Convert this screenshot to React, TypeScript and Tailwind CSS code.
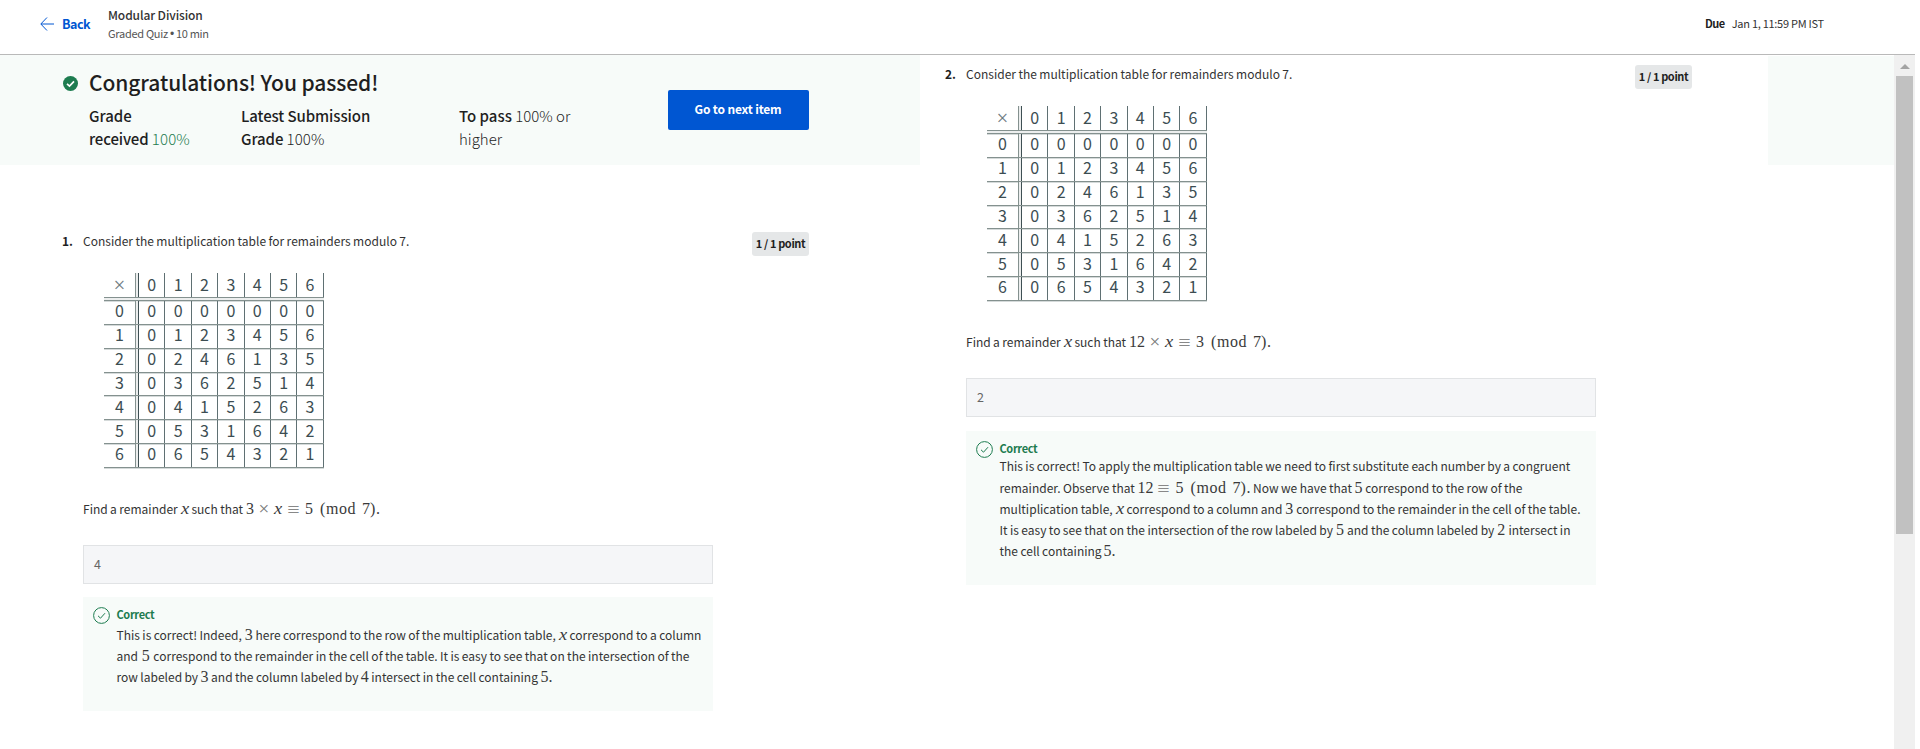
import type { ReactNode } from "react";

const TABLE = [0, 1, 2, 3, 4, 5, 6].map((r) => [0, 1, 2, 3, 4, 5, 6].map((c) => (r * c) % 7));

const MATH = "font-['Liberation_Serif','Times_New_Roman',serif] leading-[0] tracking-normal [word-spacing:normal] text-[#3a3a3a]";

function M({ children }: { children: ReactNode }) {
  return <span className={`${MATH} shrink-0 text-[16px]`}>{children}</span>;
}

function X() {
  return <span className={`${MATH} inline-block w-2 scale-x-115 text-center text-[16px] italic`}>x</span>;
}

function Times() {
  return <span className="inline-block w-5 translate-y-px text-center text-[19px] text-[#777]">×</span>;
}

function Mod({ value, modulus }: { value: string; modulus: string }) {
  return (
    <>
      <span className="inline-block w-[23px] translate-y-[2px] scale-x-110 text-center text-[20px] text-[#888]">≡</span>
      <span className="inline-block w-2">{value}</span>
      <span className="ml-[7px] inline-block w-[5px]">(</span>
      <span className="ml-px inline-block w-8 tracking-[0.5px]">mod</span>
      <span className="ml-1 inline-block w-2">{modulus}</span>
      <span className="inline-block w-[6px]">)</span>
    </>
  );
}

function Line({ width, children }: { width: string; children: ReactNode }) {
  return <div className={`flex items-baseline justify-between whitespace-nowrap ${width}`}>{children}</div>;
}

const HLINE = "border-b border-[#84918f] shadow-[0_1px_0_#d5dada]";

function RemainderTable() {
  const cell = "flex items-center justify-center border-r border-[#5f7073] pb-[3px]";
  return (
    <div className="w-[220px] text-[16px] leading-none tracking-normal text-[#3c4d52]">
      <div className={`flex h-[25px] ${HLINE}`}>
        <div className="flex w-8 items-center justify-center border-r border-[#84918f] font-['Liberation_Serif',serif] text-[21px] text-[#6e7b7f]">
          ×
        </div>
        <div className="w-[3px] border-r border-[#3f5054] bg-[#eceeee]" />
        {TABLE[1].map((n) => (
          <div key={n} className={`w-[26.4px] ${cell}`}>
            {n}
          </div>
        ))}
      </div>
      <div className={`h-[3px] bg-[#eceeee] ${HLINE}`} />
      {TABLE.map((row, r) => (
        <div key={r} className={`flex h-[23.85px] ${HLINE}`}>
          <div className="flex w-8 items-center justify-center border-r border-[#84918f] pb-[4px]">{r}</div>
          <div className="w-[3px] border-r border-[#3f5054] bg-[#eceeee]" />
          {row.map((n, c) => (
            <div key={c} className="flex w-[26.4px] items-center justify-center border-r border-[#5f7073] pb-[4px]">
              {n}
            </div>
          ))}
        </div>
      ))}
    </div>
  );
}

function Question({
  number,
  prompt,
  answer,
  feedbackClass,
  linesClass,
  children,
}: {
  number: number;
  prompt: ReactNode;
  answer: string;
  feedbackClass: string;
  linesClass: string;
  children: ReactNode;
}) {
  return (
    <section className="flex w-[747px] items-start text-[12px] leading-[18px] tracking-[0.01px] text-[#333] [word-spacing:-0.3px]">
      <span className="w-[21px] shrink-0 font-bold text-[#1f1f1f]">{number}.</span>
      <div className="w-[630px] shrink-0">
        <div className="h-[41px] whitespace-nowrap">Consider the multiplication table for remainders modulo 7.</div>
        <div className="pl-[21px]">
          <RemainderTable />
        </div>
        <div className="mt-[32px] h-[18px]">{prompt}</div>
        <div className="mt-[27px] flex h-[39px] items-center border border-[#e1e3e5] bg-[#f5f6f8] pl-[10px] text-[12.5px] text-[#666]">
          {answer}
        </div>
        <div className={`flex bg-[#f7fbf9] pl-[10px] ${feedbackClass}`}>
          <svg className="mt-[10px] size-[17px] shrink-0" viewBox="0 0 17 17" fill="none" stroke="#1d7c50">
            <circle cx="8.5" cy="8.5" r="7.9" strokeWidth="1" />
            <path d="M5 8.8 7.5 11.2 12 6.2" strokeWidth="1" />
          </svg>
          <div className="pl-[6.5px] pt-[9px]">
            <div className="h-4 text-[11px] font-bold leading-4 tracking-[-0.35px] text-[#1d7c50]">Correct</div>
            <div className={linesClass}>{children}</div>
          </div>
        </div>
      </div>
      <span className="ml-[39px] h-6 w-[57px] shrink-0 whitespace-nowrap rounded-[3px] bg-[#e5e7e8] text-center text-[11px] font-bold leading-[23px] tracking-[-0.38px] text-[#1f1f1f] [word-spacing:normal]">
        1 / 1 point
      </span>
    </section>
  );
}

export default function App() {
  return (
    <div className="h-[749px] w-[1920px] overflow-hidden bg-white font-['Noto_Sans_CJK_SC',sans-serif] text-[#1f1f1f]">
      <header className="flex h-[55px] w-[1915px] border-b border-[#b9b9b9] pl-10">
        <a className="flex h-12 items-center gap-2 text-[#0056d2]">
          <svg className="size-[14px]" viewBox="0 0 14 14" fill="none" stroke="currentColor" strokeWidth="1">
            <path d="M14 7H1M7 .5.8 7 7 13.5" />
          </svg>
          <span className="w-[46px] text-[12.5px] font-bold leading-none tracking-[-0.5px]">Back</span>
        </a>
        <div className="flex-1 pt-[6px]">
          <div className="text-[12px] font-medium leading-[18px] tracking-[-0.1px] text-[#333]">Modular Division</div>
          <div className="flex gap-[2px] text-[11px] leading-[18px] tracking-[-0.28px] text-[#555]">
            <span>Graded Quiz</span>
            <span className="translate-y-px font-['Liberation_Sans',sans-serif] text-[12px]">•</span>
            <span>10 min</span>
          </div>
        </div>
        <div className="flex w-[210px] gap-[7px] pt-[14px] text-[11px] leading-[18px] text-[#333]">
          <span className="font-bold tracking-[-0.5px] text-[#1f1f1f]">Due</span>
          <span className="tracking-[-0.28px]">Jan 1, 11:59 PM IST</span>
        </div>
      </header>

      <div className="flex h-[694px]">
        <main className="w-[920px]">
          <div className="flex h-[110px] bg-[#f7fbf9] pl-[63px]">
            <svg className="mt-[21px] size-[15px] shrink-0" viewBox="0 0 15 15">
              <circle cx="7.5" cy="7.5" r="7.5" fill="#1d7c50" />
              <path d="M4 7.8 6.5 10.1 11 5.3" fill="none" stroke="#fff" strokeWidth="1.7" />
            </svg>
            <div className="w-[590px] shrink-0 pl-[11px] pt-[13px]">
              <h1 className="text-[21px] font-medium leading-7 tracking-[-0.09px]">Congratulations! You passed!</h1>
              <div className="mt-2 flex whitespace-nowrap text-[15px] font-light leading-[23px]">
                <div className="w-[152px]">
                  <b className="font-medium">Grade</b>
                  <br />
                  <b className="font-medium tracking-[-0.15px]">received</b> <span className="tracking-[0.15px] text-[#1d7c50]">100%</span>
                </div>
                <div className="w-[218px] tracking-[-0.09px]">
                  <b className="font-medium">Latest Submission</b>
                  <br />
                  <b className="font-medium">Grade</b> <span className="tracking-[0.1px]">100%</span>
                </div>
                <div>
                  <b className="font-medium">To pass</b> 100% or
                  <br />
                  higher
                </div>
              </div>
            </div>
            <button className="mt-[35px] h-10 w-[141px] rounded-[2px] bg-[#0056d2] pr-px text-[12px] font-bold leading-[38px] tracking-[-0.17px] text-white">
              <span className="block h-10">Go to next item</span>
            </button>
          </div>
          <div className="pl-[62px] pt-[67px]">
            <Question
              number={1}
              answer="4"
              feedbackClass="mt-[13px] h-[114px]"
              linesClass="pt-[1.6px] leading-[21px]"
              prompt={
                <Line width="w-[297px]">
                  <span>Find a remainder</span>
                  <X />
                  <span>such that</span>
                  <M>
                    <span className="inline-block w-2">3</span>
                    <Times />
                    <X />
                    <Mod value="5" modulus="7" />.
                  </M>
                </Line>
              }
            >
              <Line width="w-[585px]">
                <span>This is correct! Indeed,</span>
                <M>3</M>
                <span>here correspond to the row of the multiplication table,</span>
                <X />
                <span>correspond to a column</span>
              </Line>
              <Line width="w-[573px]">
                <span>and</span>
                <M>5</M>
                <span>correspond to the remainder in the cell of the table. It is easy to see that on the intersection of the</span>
              </Line>
              <Line width="w-[436px]">
                <span>row labeled by</span>
                <M>3</M>
                <span>and the column labeled by</span>
                <M>4</M>
                <span>intersect in the cell containing</span>
                <M>5.</M>
              </Line>
            </Question>
          </div>
        </main>

        <section className="w-[848px] pl-[25px] pt-[10px]">
          <Question
            number={2}
            answer="2"
            feedbackClass="mt-[14px] h-[154px]"
            linesClass="-mt-[0.6px] leading-[21.25px]"
            prompt={
              <Line width="w-[305px]">
                <span>Find a remainder</span>
                <X />
                <span>such that</span>
                <M>
                  <span className="inline-block w-[16px]">12</span>
                  <Times />
                  <X />
                  <Mod value="3" modulus="7" />.
                </M>
              </Line>
            }
          >
            <Line width="w-[571px]">
              <span>This is correct! To apply the multiplication table we need to first substitute each number by a congruent</span>
            </Line>
            <Line width="w-[523px]">
              <span>remainder. Observe that</span>
              <M>
                <span className="inline-block w-[15px]">12</span>
                <Mod value="5" modulus="7" />.
              </M>
              <span>Now we have that</span>
              <M>5</M>
              <span>correspond to the row of the</span>
            </Line>
            <Line width="w-[581px]">
              <span>multiplication table,</span>
              <X />
              <span>correspond to a column and</span>
              <M>3</M>
              <span>correspond to the remainder in the cell of the table.</span>
            </Line>
            <Line width="w-[571px]">
              <span>It is easy to see that on the intersection of the row labeled by</span>
              <M>5</M>
              <span>and the column labeled by</span>
              <M>2</M>
              <span>intersect in</span>
            </Line>
            <Line width="w-[116px]">
              <span>the cell containing</span>
              <M>5.</M>
            </Line>
          </Question>
        </section>

        <div className="mt-px h-[109px] w-[126px] bg-[#f7fbf9]" />

        <div className="flex w-[21px] flex-col items-center bg-[#f0f0f0] pt-[9px]">
          <svg className="h-[5px] w-[10px]" viewBox="0 0 10 5">
            <path d="M0 5 5 0l5 5z" fill="#a3a3a3" />
          </svg>
          <div className="mt-[7px] h-[458px] w-[17px] bg-[#c1c1c1]" />
        </div>
      </div>
    </div>
  );
}
